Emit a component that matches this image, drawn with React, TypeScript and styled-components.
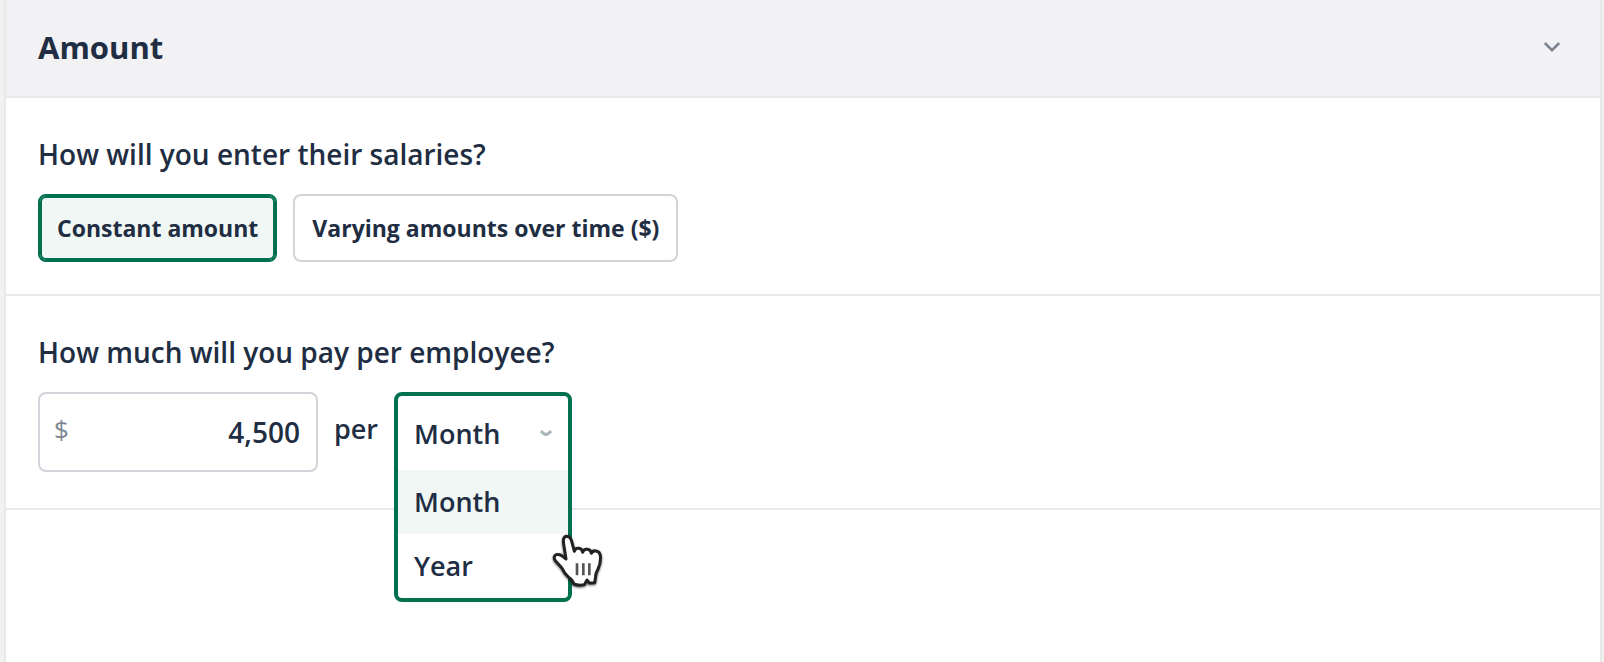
import React, { useState } from 'react';
import styled, { createGlobalStyle, css } from 'styled-components';

const ink = '#202d42';
const green = '#00704f';
const mint = '#f1f7f5';
const line = '#e8e9e9';
const outline = '#d3d3da';
const muted = '#7d8590';

const GlobalStyle = createGlobalStyle`
  *, *::before, *::after { box-sizing: border-box; }
  body {
    margin: 0;
    background: #f0f2f1;
    color: ${ink};
    font-family: "Open Sans", "Noto Sans", sans-serif;
    font-size: 28px;
    font-weight: 600;
  }
  button, input, select { font: inherit; color: inherit; margin: 0; }
`;

const Panel = styled.main`
  min-height: 100vh;
  margin: 0 2px 0 4px;
  border: solid ${line};
  border-width: 0 2px;
  background: #fff;
`;

const Header = styled.header`
  display: flex;
  align-items: center;
  justify-content: space-between;
  padding: 25px 32px 27px;
  border-bottom: 2px solid ${line};
  background: #f2f2f5;
`;

const Title = styled.h1`
  margin: 0;
  font-size: 31px;
  font-weight: 700;
  line-height: 44px;
`;

const CollapseButton = styled.button`
  display: grid;
  place-items: center;
  width: 32px;
  height: 32px;
  padding: 0;
  border: 0;
  background: none;
  color: ${muted};
`;

const Section = styled.section<{ $bottom: number }>`
  padding: 32px 32px ${p => p.$bottom}px;
  border-bottom: 2px solid ${line};
`;

const Question = styled.h2`
  margin: 0 0 16px;
  font-size: 28px;
  font-weight: 600;
  line-height: 48px;
`;

const Row = styled.div`
  display: flex;
  align-items: flex-start;
  gap: 16px;
`;

const Choice = styled.button<{ $selected: boolean }>`
  height: 68px;
  padding: 0 17px;
  border: 2px solid ${outline};
  border-radius: 8px;
  background: #fff;
  font-size: 23px;
  font-weight: 700;
  white-space: nowrap;
  ${p => p.$selected && css`
    border-color: ${green};
    background: ${mint};
    box-shadow: inset 0 0 0 2px ${green};
  `}
`;

const MoneyField = styled.label`
  display: flex;
  align-items: center;
  width: 280px;
  height: 80px;
  padding: 0 16px 0 14px;
  border: 2px solid ${outline};
  border-radius: 8px;
`;

const Currency = styled.span`
  padding-bottom: 6px;
  color: ${muted};
  font-size: 26px;
  font-weight: 500;
`;

const AmountInput = styled.input`
  flex: 1;
  min-width: 0;
  padding: 0;
  border: 0;
  outline: 0;
  background: none;
  text-align: right;
`;

const Per = styled.span`
  font-size: 27px;
  line-height: 74px;
`;

const PickerSlot = styled.div`
  position: relative;
  width: 178px;
  height: 80px;
`;

const Picker = styled.div`
  position: absolute;
  inset: 0 0 auto;
  border: 4px solid ${green};
  border-radius: 8px;
  background: #fff;
  font-size: 27px;
`;

const SelectRow = styled.div`
  display: grid;
  align-items: center;
  height: 74px;

  > * { grid-area: 1 / 1; }
  > svg { justify-self: end; margin-right: 16px; pointer-events: none; }
`;

const PeriodSelect = styled.select`
  appearance: none;
  width: 100%;
  height: 74px;
  padding: 0 16px;
  border: 0;
  outline: 0;
  background: none;
`;

const Options = styled.ul`
  margin: 0;
  padding: 0;
  list-style: none;
`;

const Option = styled.li<{ $active: boolean }>`
  padding: 0 16px;
  line-height: 64px;
  background: ${p => (p.$active ? mint : 'transparent')};
`;

const Pointer = styled.svg`
  position: absolute;
  left: 136px;
  top: 128px;
  pointer-events: none;
  filter: drop-shadow(0 1px 1px rgba(0, 0, 0, 0.6));
`;

const periods = ['Month', 'Year'];
const modes = ['Constant amount', 'Varying amounts over time ($)'];

export default function App() {
  const [mode, setMode] = useState(modes[0]);
  const [amount, setAmount] = useState('4,500');
  const [period, setPeriod] = useState(periods[0]);

  return (
    <>
      <GlobalStyle />
      <Panel>
        <Header>
          <Title>Amount</Title>
          <CollapseButton aria-label="Collapse amount">
            <svg width="18" height="12" viewBox="0 0 18 12" fill="none" stroke="currentColor" strokeWidth="2.6">
              <path d="M1.8 2 L9 9.2 L16.2 2" />
            </svg>
          </CollapseButton>
        </Header>

        <Section $bottom={32}>
          <Question>How will you enter their salaries?</Question>
          <Row>
            {modes.map(m => (
              <Choice key={m} type="button" $selected={m === mode} aria-pressed={m === mode} onClick={() => setMode(m)}>
                {m}
              </Choice>
            ))}
          </Row>
        </Section>

        <Section $bottom={36}>
          <Question>How much will you pay per employee?</Question>
          <Row>
            <MoneyField>
              <Currency>$</Currency>
              <AmountInput aria-label="Pay per employee" value={amount} onChange={e => setAmount(e.target.value)} />
            </MoneyField>
            <Per>per</Per>
            <PickerSlot>
              <Picker>
                <SelectRow>
                  <PeriodSelect aria-label="Pay period" value={period} onChange={e => setPeriod(e.target.value)}>
                    {periods.map(p => <option key={p}>{p}</option>)}
                  </PeriodSelect>
                  <svg width="12" height="7" viewBox="0 0 12 7" fill="none" stroke="#a9b7bd" strokeWidth="3">
                    <path d="M0.6 1.4 C3 2.4 4.4 4.6 6 4.6 S9 2.4 11.4 1.4" />
                  </svg>
                </SelectRow>
                <Options role="listbox" aria-label="Pay period options">
                  {periods.map(p => (
                    <Option key={p} role="option" aria-selected={p === period} $active={p === period} onClick={() => setPeriod(p)}>
                      {p}
                    </Option>
                  ))}
                </Options>
              </Picker>
              <Pointer width="90" height="80" viewBox="0 0 270 240" aria-hidden="true">
                <path
                  d="M108 117 L102 78 Q96 50 110 49 Q121 49 125 64 L133 94 Q136 84 146 85 Q156 86 158 97 Q162 86 172 88 Q182 89 184 100 Q188 91 198 93 Q210 95 211 108 Q213 128 204 147 Q197 160 197 168 L194 188 L178 189 L171 180 L163 194 Q147 198 131 192 Q129 181 115 171 Q103 160 95 143 L76 122 Q68 109 79 104 Q89 101 98 109 Z"
                  fill="#fff"
                  stroke="#222"
                  strokeWidth="9"
                  strokeLinejoin="round"
                />
                <path d="M141 130 V166 M160 130 V166 M178 130 V166" stroke="#555" strokeWidth="8" />
              </Pointer>
            </PickerSlot>
          </Row>
        </Section>
      </Panel>
    </>
  );
}
